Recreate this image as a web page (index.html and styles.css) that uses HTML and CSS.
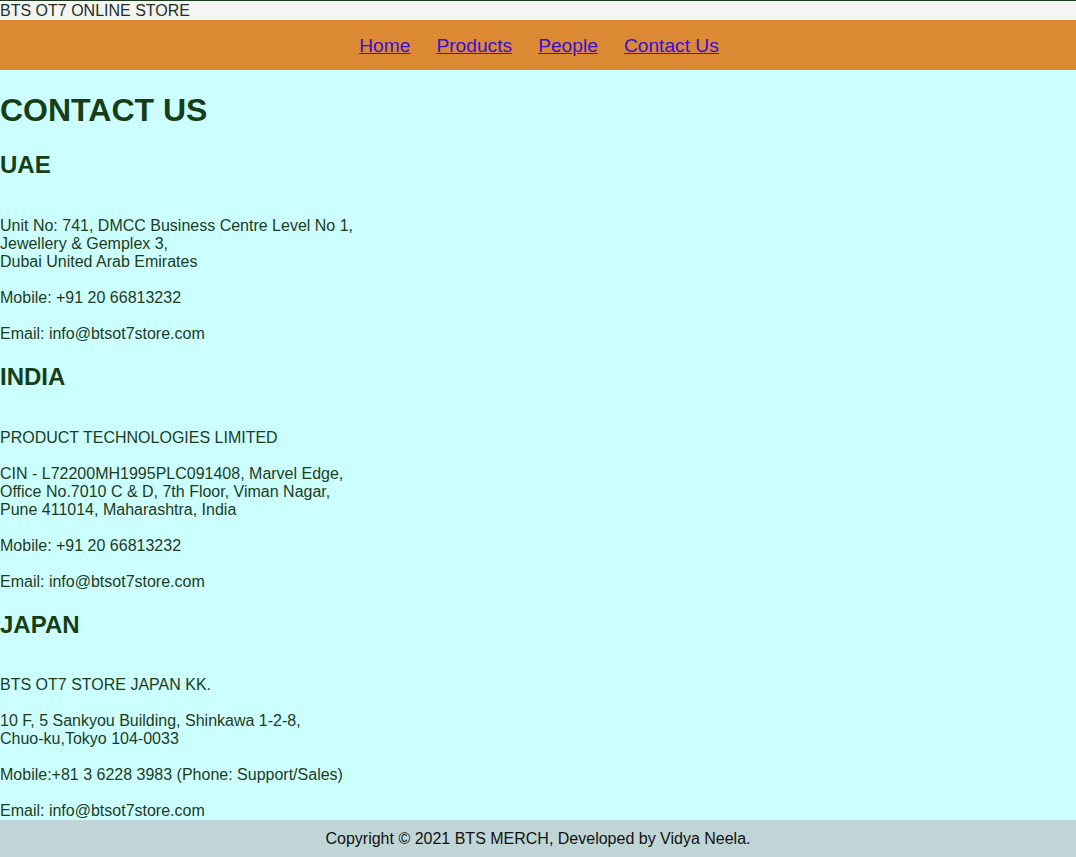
FILE: index.html
```html
<!DOCTYPE html>
<html lang="en">
<head>
<meta charset="utf-8">
<title>BTS OT7 Online Store - Contact Us</title>
<link rel="stylesheet" href="styles.css">
</head>
<body>
<header class="topbar">BTS OT7 ONLINE STORE</header>
<nav class="nav">
  <a href="#">Home</a>
  <a href="#">Products</a>
  <a href="#">People</a>
  <a href="#">Contact Us</a>
</nav>
<main class="main">
  <h1 class="title">CONTACT US</h1>
  <section class="region">
    <h2 class="region-name">UAE</h2>
    <p class="address"><br>Unit No: 741, DMCC Business Centre Level No 1,<br>Jewellery &amp; Gemplex 3,<br>Dubai United Arab Emirates<br><br>Mobile: +91 20 66813232<br><br>Email: info@btsot7store.com</p>
  </section>
  <section class="region">
    <h2 class="region-name">INDIA</h2>
    <p class="address"><br>PRODUCT TECHNOLOGIES LIMITED<br><br>CIN - L72200MH1995PLC091408, Marvel Edge,<br>Office No.7010 C &amp; D, 7th Floor, Viman Nagar,<br>Pune 411014, Maharashtra, India<br><br>Mobile: +91 20 66813232<br><br>Email: info@btsot7store.com</p>
  </section>
  <section class="region">
    <h2 class="region-name">JAPAN</h2>
    <p class="address last"><br>BTS OT7 STORE JAPAN KK.<br><br>10 F, 5 Sankyou Building, Shinkawa 1-2-8,<br>Chuo-ku,Tokyo 104-0033<br><br>Mobile:+81 3 6228 3983 (Phone: Support/Sales)<br><br>Email: info@btsot7store.com</p>
  </section>
</main>
<footer class="footer">Copyright © 2021 BTS MERCH, Developed by Vidya Neela.</footer>
</body>
</html>
```

FILE: styles.css
```css
html, body {
  margin: 0;
  padding: 0;
}
body {
  font-family: "Liberation Sans", Arial, sans-serif;
  font-size: 16px;
  background: #ccffff;
  color: #1a3a1a;
}
.topbar {
  background: #f4f5f4;
  border-top: 1px solid #1e3a1e;
  padding-top: 1px;
  height: 18px;
  line-height: 18px;
  color: #1f2f1f;
}
.nav {
  background: #db8a33;
  height: 50px;
  display: flex;
  justify-content: center;
  align-items: center;
  gap: 26px;
}
.nav a {
  color: #3a0ed8;
  font-size: 19.2px;
  text-decoration: underline;
  position: relative;
  top: 1px;
  left: 1px;
}
.main {
  display: flow-root;
  padding-top: 1px;
}
.title {
  font-size: 32px;
  margin: 21.44px 0;
  color: #173e17;
}
.region-name {
  font-size: 24px;
  margin: 19.92px 0;
  color: #173e17;
}
.address {
  margin: 16px 0;
  line-height: 18px;
  color: #1e3b1e;
}
.address.last {
  margin-bottom: 0;
}
.footer {
  background: #c0d5d6;
  color: #111;
  text-align: center;
  padding: 10px 0;
  line-height: 18px;
}
```
